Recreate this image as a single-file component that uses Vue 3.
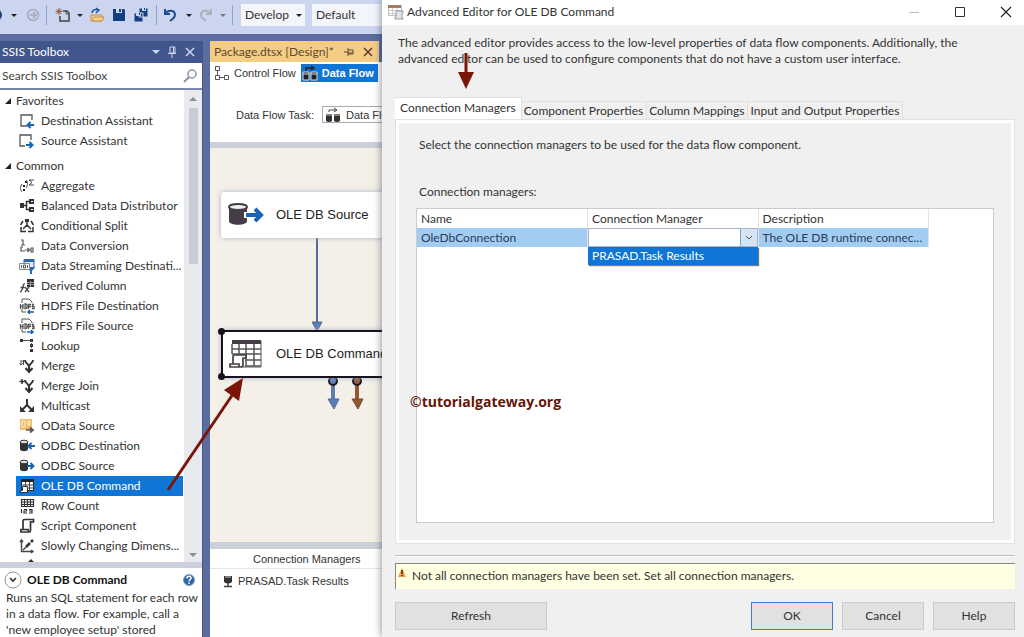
<script setup>
  import {ref} from 'vue'

  const search = ref('')
  const selectedTool = ref('OLE DB Command')
  const selectedTab = ref('Connection Managers')

  const tabs = ['Connection Managers', 'Component Properties', 'Column Mappings', 'Input and Output Properties']

  const cylinder = '<path fill="#333" d="M1 4v7c0 3 8 3 8 0V4z"/><ellipse cx="5" cy="4" rx="4" ry="1.8" fill="#ddd" stroke="#333"/>'
  const arrowLeft = '<path stroke="#1763b5" stroke-width="2" fill="none" d="M16 8H10M12.500 5l-3 3 3 3"/>'
  const arrowRight = '<path stroke="#1763b5" stroke-width="2" fill="none" d="M8 8h6M11.500 5l3 3-3 3"/>'
  const hdfs = '<path fill="none" stroke="#555" d="M3 5V1h7l3 3v1M3 11v3h4"/><path stroke="#555" stroke-width="1.300" fill="none" d="M1.500 6v5M4 6v5M1.500 8.500H4M6 6v4.500h1l1-1v-2.500l-1-1zM12 6.500H9.500V11M9.500 8.500H12M15 6.500h-1.500v2H15v2h-2"/>'
  const merge = '<path fill="none" stroke="#333" stroke-width="2" d="M6 2c0 4 4 3 4 7v5M14 2c0 4-4 3-4 7M6.500 10l3.500 4 3.500-4"/>'

  const icons = {
    destAssistant: '<path fill="none" stroke="#555" stroke-width="1.300" d="M8 13H2V2h11v5"/><path fill="none" stroke="#1763b5" stroke-width="2" d="M15 12H9M11.500 9l-3 3 3 3"/>',
    sourceAssistant: '<path fill="none" stroke="#555" stroke-width="1.300" d="M6 13H1V2h11v5"/><path fill="none" stroke="#1763b5" stroke-width="2" d="M7 12h6M10.500 9l3 3-3 3"/>',
    aggregate: '<path fill="none" stroke="#444" d="M3 6c-2 3-2 6 0 8M7 2c2 2 2 5 0 8M15 2h-5l3 2.500L10 7h5"/><path fill="#222" d="M4 7h2v2H4zM4 11h2v2H4zM6 3h2v2H6z"/>',
    balanced: '<path fill="#333" d="M1 5h4v5H1zM10 1h5v5h-5zM10 9h5v5h-5z"/><path fill="none" stroke="#333" stroke-width="1.500" d="M4 7.500h4M10 3.500H7.500v8H10"/><path fill="#fff" d="M12 3h2v1h-2zM12 11h2v1h-2z"/>',
    split: '<path fill="none" stroke="#333" stroke-width="1.500" d="M8 3v4l-4 4M8 7l4 4M2 9v4.500h5M14 9v4.500H9M4 3 1.500 7M12 3l2.500 4"/><path fill="#333" d="M6 1h4v3H6z"/>',
    conversion: '<path fill="none" stroke="#555" stroke-width="1.200" d="M2 2h2v5M2 7h4M4 9H2v4h4M6 12h4M8.500 10l2 2-2 2M12 10h2v4h-2z"/>',
    streaming: '<path fill="#dbe8f5" stroke="#2c68ad" d="M5 1.500h10v9H5z"/><path fill="#2c68ad" d="M5 1h10v3H5zM7 9h9l-3 4v3h-2v-3z"/><path fill="#fff" stroke="#888" d="M.5 5.500h10v6H.5z"/><path fill="none" stroke="#555" d="M2.500 7v3M4.500 7h2v3h-2zM8.500 7v3"/>',
    derived: '<path fill="#333" d="M8 1h7v8H8z"/><path stroke="#999" d="M8 4.500h7M8 6.500h7M11.500 3v6"/><path fill="none" stroke="#444" stroke-width="1.300" d="M6 6C3 5 5 13 1 14M1.500 9.500h4M6 9l4 5M10 9l-4 5"/>',
    hdfsDest: hdfs + '<path fill="none" stroke="#1763b5" stroke-width="1.500" d="M15 14H9M11 12l-2 2 2 2"/>',
    hdfsSource: hdfs + '<path fill="none" stroke="#1763b5" stroke-width="1.500" d="M8 14h6M12 12l2 2-2 2"/>',
    lookup: '<path fill="#333" d="M1 1h3v3H1zM11 1h3v3h-3zM11 6h3v3h-3zM11 11h3v3h-3z"/><path stroke="#555" fill="none" d="M4 2.500h8"/><path stroke="#555" stroke-dasharray="1 1" fill="none" d="M12.500 3v9"/>',
    merge: merge + '<path fill="none" stroke="#444" d="M2 2v5M.5 5.500 2 7l1.500-1.500M4.500 7V2M3.500 3.500l1-1.500"/>',
    mergeJoin: merge + '<path stroke="#333" stroke-width="1.500" d="M3 1v5M.5 3.500h5"/>',
    multicast: '<path fill="none" stroke="#333" stroke-width="2" d="M8 1v6l-5 5M8 7l5 5"/><path fill="#333" d="M1 8v6h6zM15 8v6H9z"/>',
    odata: '<path fill="#f1bd69" d="M1 1h12v11H1z"/><path fill="none" stroke="#fff3d8" d="M3 3h3v6H3zM9 3h2v4H9z"/><path fill="none" stroke="#555" stroke-width="1.700" d="M7 12h6M11 9.500l3 2.500-3 2.500"/>',
    odbcDest: cylinder + arrowLeft,
    odbcSource: cylinder + arrowRight,
    command: '<path fill="#fff" stroke="#222" d="M2.500 1.500h12v11h-12z"/><path fill="#222" d="M2 1h13v3H2z"/><path stroke="#444" fill="none" d="M2 7h13M2 10h13M6.500 4v9M10.500 4v9"/><path fill="#fff" stroke="#333" d="M3.500 8.500h5v6h-7v-2h2z"/>',
    rowCount: '<path fill="none" stroke="#333" stroke-width="1.200" d="M2.500 1.500h12v7h-12zM2 4h13M2 6.500h13M5.500 1v8M8.500 1v8M11.500 1v8M2.500 11v4M5 11.500h2.500v1.500H5v2h3M10 11.500h3V15h-3M10 13h3"/>',
    script: '<path fill="none" stroke="#333" stroke-width="1.700" d="M4 11V3q0-1.500 2-1.500h8.500V4H12M11.500 3v9q0 2-2 2H2v-2.500h7V13"/>',
    scd: '<path fill="none" stroke="#444" stroke-width="1.400" d="M2.500 14V2M1 4l1.500-2L4 4M2 13.500h12M12 12l2 1.500-2 1.500M4 12l3-3"/><path stroke="#333" stroke-width="2.500" d="m7 9 4-4M12 4l2-2"/>',
    sort: '<path fill="#333" d="M2 4h4v3H2zM9 4l3-3 3 3v3H9z"/>'
  }

  const groups = [
    {
      name: 'Favorites',
      items: [
        {name: 'Destination Assistant', icon: 'destAssistant'},
        {name: 'Source Assistant', icon: 'sourceAssistant'}
      ]
    },
    {
      name: 'Common',
      items: [
        {name: 'Aggregate', icon: 'aggregate'},
        {name: 'Balanced Data Distributor', icon: 'balanced'},
        {name: 'Conditional Split', icon: 'split'},
        {name: 'Data Conversion', icon: 'conversion'},
        {name: 'Data Streaming Destinati...', icon: 'streaming'},
        {name: 'Derived Column', icon: 'derived'},
        {name: 'HDFS File Destination', icon: 'hdfsDest'},
        {name: 'HDFS File Source', icon: 'hdfsSource'},
        {name: 'Lookup', icon: 'lookup'},
        {name: 'Merge', icon: 'merge'},
        {name: 'Merge Join', icon: 'mergeJoin'},
        {name: 'Multicast', icon: 'multicast'},
        {name: 'OData Source', icon: 'odata'},
        {name: 'ODBC Destination', icon: 'odbcDest'},
        {name: 'ODBC Source', icon: 'odbcSource'},
        {name: 'OLE DB Command', icon: 'command'},
        {name: 'Row Count', icon: 'rowCount'},
        {name: 'Script Component', icon: 'script'},
        {name: 'Slowly Changing Dimens...', icon: 'scd'},
        {name: 'Sort', icon: 'sort'}
      ]
    }
  ]
</script>

<template>
  <main class="desktop">
    <div class="ide">
      <div class="toolbar">
        <button class="tool back" aria-label="Back">
          <svg width="16" height="16" viewBox="0 0 16 16"><circle cx="8" cy="8" r="6" fill="#1c3f87"/><path d="M12 8H5M8 5 5 8l3 3" fill="none" stroke="#fff" stroke-width="1.500"/></svg>
        </button>
        <i class="caret"></i>
        <button class="tool forward" aria-label="Forward">
          <svg width="14" height="14" viewBox="0 0 14 14"><circle cx="7" cy="7" r="5.500" fill="none" stroke="#a3abb9" stroke-width="1.500"/><path d="M3 7h7M7 4l3 3-3 3" fill="none" stroke="#a3abb9" stroke-width="1.700"/></svg>
        </button>
        <i class="sep"></i>
        <button class="tool" aria-label="New project">
          <svg width="16" height="16" viewBox="0 0 16 16"><path d="M8 4h4l2 2v8H5V9" fill="none" stroke="#444" stroke-width="1.500"/><path d="M11 3v4h3" fill="none" stroke="#444"/><path d="M4 1v7M.5 4.500h7M1.500 2l5 5M6.500 2l-5 5" stroke="#8b5b30" stroke-width="1"/></svg>
        </button>
        <i class="caret"></i>
        <button class="tool" aria-label="Open file">
          <svg width="16" height="16" viewBox="0 0 16 16"><path d="M2 14V8h11v6z" fill="#ead1a3" stroke="#c99241"/><path d="M3 14 5 10h10l-2 4z" fill="#f2d395" stroke="#c99241"/><path d="M3 6c0-3 3-4 6-3M7 1l3 2-3 3" fill="none" stroke="#24599f" stroke-width="1.500"/></svg>
        </button>
        <button class="tool" aria-label="Save">
          <svg width="16" height="16" viewBox="0 0 16 16"><path d="M2 2h11l1 1v11H2z" fill="#153e80"/><path d="M5 2h6v4H5z" fill="#ccd5f0"/><path d="M8 2h2v3H8z" fill="#153e80"/></svg>
        </button>
        <button class="tool save-all" aria-label="Save all">
          <svg width="16" height="16" viewBox="0 0 16 16"><path d="M6 1h9v9H6zM1 6h9v9H1z" fill="#153e80" stroke="#ccd5f0"/><path d="M9 1h4v3H9zM3 6h5v3H3z" fill="#ccd5f0"/><path d="M11 1h1v2h-1zM6 6h1v2H6z" fill="#153e80"/></svg>
        </button>
        <i class="sep"></i>
        <button class="tool undo" aria-label="Undo">
          <svg width="16" height="16" viewBox="0 0 16 16"><path d="M3 2v5h5M3 7c3-5 10-4 10 1 0 3-3 4-5 6" fill="none" stroke="#1d4b91" stroke-width="2"/></svg>
        </button>
        <i class="caret"></i>
        <button class="tool redo" aria-label="Redo">
          <svg width="16" height="16" viewBox="0 0 16 16"><path d="M13 2v5H8M13 7C10 2 3 3 3 8c0 3 3 4 5 6" fill="none" stroke="#a9b1bf" stroke-width="2"/></svg>
        </button>
        <i class="caret dim"></i>
        <i class="sep"></i>
        <span class="select develop">
          <select aria-label="Configuration"><option>Develop</option></select>
          <i class="caret"></i>
        </span>
        <span class="select platform">
          <select aria-label="Platform"><option>Default</option></select>
        </span>
      </div>

      <div class="workspace">
        <aside class="toolbox">
          <header class="toolbox__title">
            <h2>SSIS Toolbox</h2>
            <button aria-label="Window position"><i class="caret"></i></button>
            <button aria-label="Auto hide">
              <svg width="12" height="12" viewBox="0 0 12 12"><path d="M4 1h5v6H4zM2 7.500h8M6 8v4M7.500 1v6" fill="none" stroke="#ccd6ef"/></svg>
            </button>
            <button aria-label="Close toolbox">
              <svg width="12" height="12" viewBox="0 0 12 12"><path d="m2 2 8 8M10 2l-8 8" stroke="#ccd6ef" stroke-width="1.500"/></svg>
            </button>
          </header>
          <div class="searchbox">
            <input v-model="search" type="text" aria-label="Search SSIS Toolbox" placeholder="Search SSIS Toolbox">
            <svg width="16" height="16" viewBox="0 0 16 16"><circle cx="10" cy="6" r="4" fill="none" stroke="#8b93a0" stroke-width="1.500"/><path d="m7 9-5 5" stroke="#8b93a0" stroke-width="2"/></svg>
          </div>
          <div class="tools">
            <div class="tools__list">
              <section v-for="group in groups" :key="group.name" class="group">
                <h3><svg width="6" height="6" viewBox="0 0 6 6"><path d="M6 0v6H0z" fill="#222"/></svg>{{ group.name }}</h3>
                <button
                  v-for="item in group.items"
                  :key="item.name"
                  class="item"
                  :class="{selected: item.name === selectedTool}"
                  @click="selectedTool = item.name"
                >
                  <svg width="16" height="16" viewBox="0 0 16 16" v-html="icons[item.icon]"></svg>
                  <span>{{ item.name }}</span>
                </button>
              </section>
            </div>
            <div class="scrollbar">
              <i class="up"></i>
              <div class="thumb"></div>
              <i class="down"></i>
            </div>
          </div>
          <div class="details">
            <header>
              <button class="round" aria-label="Collapse">
                <svg width="18" height="18" viewBox="0 0 18 18"><circle cx="9" cy="9" r="8" fill="#fff" stroke="#999"/><path d="m6 7 3 3 3-3" fill="none" stroke="#333" stroke-width="1.700"/></svg>
              </button>
              <h3>{{ selectedTool }}</h3>
              <button class="round" aria-label="Help on this item">
                <svg width="12" height="12" viewBox="0 0 12 12"><circle cx="6" cy="6" r="5.500" fill="#2c64a8" stroke="#8b9bb2"/><path d="M4 4.500c0-3 4-3 4-.5 0 2-2 1.500-2 3.500M6 8.500V10" fill="none" stroke="#fff" stroke-width="1.500"/></svg>
              </button>
            </header>
            <p>Runs an SQL statement for each row in a data flow. For example, call a 'new employee setup' stored</p>
          </div>
        </aside>

        <section class="document">
          <div class="doctab">
            <span>Package.dtsx [Design]*</span>
            <button aria-label="Pin tab">
              <svg width="10" height="10" viewBox="0 0 10 10"><path d="M0 5h4M4 1v8M4 3h5v4H4M4 6h5" fill="none" stroke="#5b4931"/></svg>
            </button>
            <button aria-label="Close tab">
              <svg width="10" height="10" viewBox="0 0 10 10"><path d="m1 1 8 8M9 1 1 9" stroke="#5b3931" stroke-width="1.500"/></svg>
            </button>
          </div>
          <div class="flowbar">
            <div class="flowtabs">
              <button>
                <svg width="16" height="16" viewBox="0 0 16 16"><path d="M1.500 1.500h4v4h-4zM1.500 10.500h4v4h-4zM10.500 10.500h4v4h-4zM3.500 6v4M6 12.500h4" fill="none" stroke="#555"/></svg>
                Control Flow
              </button>
              <button class="active">
                <svg width="16" height="16" viewBox="0 0 16 16"><path d="M1 7h6v8H1zM9 7h6v8H9z" fill="#222" stroke="#ddd"/><path d="M1 9h6M9 9h6" stroke="#ddd"/><path d="M4 6V3h7M9 1l3 2-3 2" fill="none" stroke="#222" stroke-width="1.500"/></svg>
                Data Flow
              </button>
              <button aria-label="Parameters">
                <svg width="16" height="16" viewBox="0 0 16 16"><rect y="3" width="14" height="10" rx="3" fill="#333"/></svg>
              </button>
            </div>
            <div class="flowtask">
              <label for="task">Data Flow Task:</label>
              <span class="task">
                <svg width="16" height="16" viewBox="0 0 16 16"><path d="M1 7h6v7q-3 2-6 0zM9 7h6v7q-3 2-6 0z" fill="#333"/><path d="M1 8h6M9 8h6" stroke="#ccc"/><path d="M4 5V3h7M9 1l3 2-3 2" fill="none" stroke="#444"/></svg>
                <select id="task"><option>Data Flow Task</option></select>
              </span>
            </div>
          </div>
          <div class="canvas">
            <svg class="wires" width="172" height="394" viewBox="0 0 172 394">
              <path d="M107 90v87" stroke="#50699f" stroke-width="2"/>
              <path d="M102 174h10l-5 9z" fill="#5e7cb4" stroke="#50699f"/>
              <path d="M123 236v18" stroke="#5e7cb4" stroke-width="4"/><path d="M118 251h11l-5 10z" fill="#5e7cb4" stroke="#50699f"/>
              <path d="M147 236v18" stroke="#8f5a35" stroke-width="4"/><path d="M142 251h11l-5 10z" fill="#8f5a35" stroke="#7d4a2c"/>
              <circle cx="123" cy="233" r="4" fill="#5e7cb4" stroke="#18141f" stroke-width="2"/>
              <circle cx="147" cy="233" r="4" fill="#8f5a35" stroke="#18141f" stroke-width="2"/>
            </svg>
            <div class="node source">
              <svg width="36" height="28" viewBox="0 0 36 28"><path d="M1 6v14c0 5 18 5 18 0v-3h-3v-6h3V6z" fill="#453d46"/><ellipse cx="10" cy="6" rx="9" ry="3" fill="#eee" stroke="#453d46" stroke-width="2"/><path d="M18 14h14M27 8l6 6-6 6" fill="none" stroke="#1763b5" stroke-width="4"/></svg>
              <span>OLE DB Source</span>
            </div>
            <div class="node command">
              <i class="handle top"></i>
              <i class="handle bottom"></i>
              <svg width="36" height="30" viewBox="0 0 36 30"><path d="M4 2h29v26H15" fill="#fff" stroke="#555"/><path d="M4 1h29v4H4z" fill="#453d46"/><path d="M4 5v10M4 10h29M4 15h29M17 21h16M11 5v10M18 5v22M26 5v22M17 27h16" fill="none" stroke="#555" stroke-width="1.500"/><path d="M5 25V18q0-2 2-2h11v3h-3v7q0 2-2 2H2v-3h9v3" fill="#fff" stroke="#453d46" stroke-width="1.700"/></svg>
              <span>OLE DB Command</span>
            </div>
          </div>
          <div class="managers">
            <h3>Connection Managers</h3>
            <p>
              <svg width="10" height="14" viewBox="0 0 10 14"><path d="M1 2h8v6q-4 3-8 0z" fill="#333"/><path d="M2 3h6" stroke="#ccc"/><path d="M5 9v3M1 12.500h8" stroke="#444" stroke-width="1.500"/></svg>
              PRASAD.Task Results
            </p>
          </div>
        </section>
      </div>
    </div>

    <section class="dialog" role="dialog" aria-labelledby="dialog-title">
      <header class="titlebar">
        <svg width="16" height="16" viewBox="0 0 16 16"><path d="M.5 1.500h13v10H.5z" fill="#fff" stroke="#bbb"/><path d="M0 1h13v3H0z" fill="#aa7b58"/><path d="M0 6.500h13M0 9.500h9M4.500 4v8M9 4v6" stroke="#ccc"/><path d="M8 7h7v2h-1v5h1v1H7v-2h1z" fill="#e1e7ec" stroke="#929da7"/></svg>
        <h1 id="dialog-title">Advanced Editor for OLE DB Command</h1>
        <button aria-label="Minimize"><svg width="12" height="12" viewBox="0 0 12 12"><path d="M1 6.500h10" stroke="#bbb"/></svg></button>
        <button aria-label="Maximize"><svg width="12" height="12" viewBox="0 0 12 12"><path d="M1.500 1.500h9v9h-9z" fill="none" stroke="#333"/></svg></button>
        <button aria-label="Close"><svg width="12" height="12" viewBox="0 0 12 12"><path d="m1 1 10 10M11 1 1 11" stroke="#222" stroke-width="1.200"/></svg></button>
      </header>
      <div class="dialog__body">
        <p class="intro">The advanced editor provides access to the low-level properties of data flow components. Additionally, the advanced editor can be used to configure components that do not have a custom user interface.</p>
        <div class="tabs" role="tablist">
          <button
            v-for="tab in tabs"
            :key="tab"
            role="tab"
            :aria-selected="tab === selectedTab"
            :class="{active: tab === selectedTab}"
            @click="selectedTab = tab"
          >{{ tab }}</button>
        </div>
        <div class="panel">
          <p>Select the connection managers to be used for the data flow component.</p>
          <p class="panel__label">Connection managers:</p>
          <div class="grid">
            <table>
              <thead>
                <tr><th>Name</th><th>Connection Manager</th><th>Description</th></tr>
              </thead>
              <tbody>
                <tr>
                  <td>OleDbConnection</td>
                  <td class="picker">
                    <div class="combo">
                      <select aria-label="Connection Manager"><option></option><option>PRASAD.Task Results</option></select>
                      <i class="combo__arrow"><svg width="8" height="6" viewBox="0 0 8 6"><path d="m1 1 3 3 3-3" fill="none" stroke="#555"/></svg></i>
                    </div>
                    <ul role="listbox"><li role="option">PRASAD.Task Results</li></ul>
                  </td>
                  <td>The OLE DB runtime connec...</td>
                </tr>
              </tbody>
            </table>
          </div>
        </div>
        <hr>
        <div class="warning">
          <svg width="8" height="10" viewBox="0 0 8 10"><path d="m4 0 4 9H0z" fill="#e9a24a"/><path d="M4 2v4M4 7v1" stroke="#5a1c10" stroke-width="1.500"/></svg>
          <span>Not all connection managers have been set. Set all connection managers.</span>
        </div>
        <footer class="actions">
          <button class="refresh">Refresh</button>
          <button class="ok">OK</button>
          <button>Cancel</button>
          <button>Help</button>
        </footer>
      </div>
    </section>

    <p class="watermark">©tutorialgateway.org</p>
    <svg class="pointer to-node" width="80" height="116" viewBox="0 0 80 116"><path d="M2 114 67 18" stroke="#7a1508" stroke-width="3"/><path d="M77 2 58 14l15 11z" fill="#7a1508"/></svg>
    <svg class="pointer to-tab" width="18" height="36" viewBox="0 0 18 36"><path d="M9 0v20" stroke="#7a1508" stroke-width="3"/><path d="M1 19h16L9 36z" fill="#7a1508"/></svg>
  </main>
</template>

<style>
body {
  margin: 0;
  overflow: hidden;
}
</style>

<style scoped>
* {
  margin: 0;
  padding: 0;
  box-sizing: border-box;
}
.desktop {
  position: relative;
  height: 100vh;
  overflow: hidden;
  background-color: #5b6d9f;
  color: #333;
  font-family: Lato, "Noto Sans", sans-serif;
  font-size: 12px;
  line-height: 16px;
}
svg {
  display: block;
  flex: none;
}
button, select, input {
  border: none;
  background: none;
  color: inherit;
  font: inherit;
}
select {
  appearance: none;
  outline: none;
}
h1, h2, h3 {
  font-size: 12px;
  font-weight: normal;
}
.ide {
  display: flex;
  flex-direction: column;
  height: 100%;
}
.caret {
  flex: none;
  border: 3px solid transparent;
  border-top-color: #222;
  border-bottom: none;
}
.caret.dim {
  border-top-color: #777;
}

/* toolbar */
.toolbar {
  display: flex;
  align-items: center;
  height: 34px;
  flex: none;
  padding-bottom: 4px;
  background-color: #ccd5f0;
}
.tool {
  flex: none;
  margin-right: 6px;
}
.back {
  margin-left: -12px;
  margin-right: 7px;
}
.caret + .tool {
  margin-left: 6px;
}
.tool.forward {
  margin-left: 9px;
}
.sep {
  width: 1px;
  height: 20px;
  flex: none;
  margin-right: 8px;
  background-color: #8da4cb;
}
.save-all {
  margin-right: 7px;
}
.undo {
  margin-left: -3px;
  margin-right: 8px;
}
.caret.dim {
  margin-right: 6px;
}
.select {
  display: flex;
  align-items: center;
  height: 22px;
  margin-right: 7px;
  padding: 0 4px;
  background-color: #f3f5fb;
}
.develop {
  width: 64px;
  flex: none;
}
.develop select {
  width: 51px;
  flex: none;
}
.platform {
  width: 90px;
}

/* toolbox */
.workspace {
  display: flex;
  flex: 1;
  min-height: 0;
  gap: 7px;
  padding-top: 7px;
}
.toolbox {
  display: flex;
  flex-direction: column;
  flex: none;
  width: 203px;
  border-right: 1px solid #405791;
}
.toolbox__title {
  display: flex;
  align-items: center;
  height: 22px;
  flex: none;
  gap: 6px;
  padding: 0 6px 0 2px;
  background-color: #40568d;
  color: #fff;
}
.toolbox__title h2 {
  flex: 1;
}
.toolbox__title .caret {
  display: block;
  border-width: 4px;
  border-top-color: #ccd6ef;
  border-bottom: none;
}
.searchbox {
  display: flex;
  align-items: center;
  height: 27px;
  flex: none;
  padding: 0 4px 0 2px;
  border-bottom: 2px solid #7786ab;
  background-color: #fff;
}
.searchbox input {
  flex: 1;
  min-width: 0;
}
.searchbox input::placeholder {
  color: #444;
}
.tools {
  display: flex;
  flex: 1;
  min-height: 0;
  background-color: #fff;
}
.tools__list {
  flex: 1;
  min-width: 0;
  overflow: hidden;
  padding-top: 1px;
}
.group {
  padding-bottom: 5px;
}
.group h3 {
  display: flex;
  align-items: center;
  gap: 5px;
  height: 20px;
  padding-left: 5px;
}
.item {
  display: flex;
  align-items: center;
  gap: 6px;
  width: 167px;
  height: 20px;
  margin-left: 16px;
  padding-left: 3px;
  text-align: left;
  white-space: nowrap;
}
.item.selected {
  background-color: #0f76d8;
  color: #fff;
}
.scrollbar {
  display: flex;
  flex-direction: column;
  align-items: center;
  width: 18px;
  flex: none;
  padding: 7px 0 5px;
  background-color: #e9eaee;
}
.up, .down {
  border: 4px solid transparent;
}
.up {
  border-top: none;
  border-bottom-color: #8c8f98;
}
.down {
  margin-top: auto;
  border-bottom: none;
  border-top-color: #8c8f98;
}
.thumb {
  width: 9px;
  height: 156px;
  margin-top: 7px;
  background-color: #c8ccd5;
}
.details {
  height: 75px;
  flex: none;
  overflow: hidden;
  padding: 2px 2px 0 4px;
  border-top: 6px solid #cbd0dd;
  background-color: #fff;
}
.details header {
  display: flex;
  align-items: center;
  gap: 5px;
  height: 20px;
  padding-right: 5px;
}
.details h3 {
  flex: 1;
  color: #111;
  font-weight: bold;
}
.details p {
  padding-left: 2px;
}

/* document */
.document {
  display: flex;
  flex-direction: column;
  flex: 1;
  min-width: 0;
  font-family: "Liberation Sans", Arial, sans-serif;
  font-size: 11px;
}
.doctab {
  display: flex;
  align-items: center;
  gap: 9px;
  width: 169px;
  height: 21px;
  flex: none;
  padding: 0 6px 0 4px;
  background-color: #f5cc84;
  color: #5b4931;
  font-family: Lato, "Noto Sans", sans-serif;
  font-size: 12px;
}
.doctab span {
  flex: 1;
  white-space: nowrap;
}
.flowbar {
  height: 86px;
  flex: none;
  border-bottom: 6px solid #cbd0d8;
  background-color: #fff;
}
.flowtabs, .flowtask {
  display: flex;
  align-items: center;
}
.flowtabs {
  gap: 5px;
  height: 22px;
  padding-left: 4px;
}
.flowtabs button {
  display: flex;
  align-items: center;
  gap: 4px;
  height: 18px;
}
.flowtabs .active {
  padding: 0 4px 0 1px;
  background-color: #0f76d8;
  color: #fff;
  font-weight: bold;
}
.flowtask {
  gap: 8px;
  padding: 22px 0 0 26px;
}
.task {
  display: flex;
  align-items: center;
  gap: 5px;
  width: 200px;
  height: 17px;
  padding-left: 2px;
  border: 1px solid #aaa;
}
.canvas {
  position: relative;
  flex: 1;
  min-height: 0;
  overflow: hidden;
  background-color: #f4f0e8;
}
.wires {
  position: absolute;
  left: 0;
  top: 0;
}
.node {
  position: absolute;
  left: 11px;
  display: flex;
  align-items: center;
  gap: 12px;
  width: 200px;
  height: 46px;
  padding-left: 7px;
  border-radius: 3px;
  background-color: #fff;
  box-shadow: 0 0 5px #aab3c4;
  color: #222;
  font-size: 13px;
}
.source {
  top: 44px;
}
.command {
  top: 182px;
  height: 48px;
  padding-left: 5px;
  border: 2px solid #18141f;
}
.handle {
  position: absolute;
  left: -5px;
  width: 7px;
  height: 7px;
  border-radius: 50%;
  background-color: #18141f;
}
.handle.top {
  top: -4px;
}
.handle.bottom {
  bottom: -4px;
}
.managers {
  height: 95px;
  flex: none;
  border-top: 7px solid #cbd0d8;
  background-color: #fff;
}
.managers h3 {
  height: 20px;
  padding-left: 43px;
  border-bottom: 1px solid #e5e5e5;
  font-size: 11px;
  line-height: 20px;
}
.managers p {
  display: flex;
  align-items: center;
  gap: 5px;
  padding: 4px 0 0 13px;
}

/* dialog */
.dialog {
  position: absolute;
  inset: 0 0 0 382px;
  display: flex;
  flex-direction: column;
  background-color: #f0f0f0;
  box-shadow: 0 0 8px rgba(40, 45, 60, 0.6);
}
.titlebar {
  display: flex;
  align-items: center;
  height: 25px;
  flex: none;
  gap: 3px;
  padding: 0 12px 2px 6px;
  background-color: #fff;
}
.titlebar h1 {
  flex: 1;
}
.titlebar button {
  margin-left: 31px;
}
.dialog__body {
  display: flex;
  flex-direction: column;
  flex: 1;
  min-height: 0;
  padding: 10px 9px 7px 13px;
}
.intro {
  width: 580px;
  max-width: 100%;
  padding-left: 3px;
}
.tabs {
  display: flex;
  align-items: flex-end;
  margin-top: 30px;
}
.tabs button {
  height: 18px;
  padding: 0 3px 0 2px;
  border: 1px solid #e0e0e0;
  border-bottom: none;
  border-left: none;
  line-height: 16px;
  white-space: nowrap;
}
.tabs .active {
  height: 22px;
  padding: 0 5px 2px;
  background-color: #fff;
}
.panel {
  display: flex;
  flex-direction: column;
  flex: 1;
  min-height: 0;
  padding: 14px 17px 17px;
  border: 4px solid #fff;
  outline: 1px solid #e2e2e2;
  outline-offset: -1px;
}
.panel p {
  padding-left: 3px;
}
.panel__label {
  margin-top: 31px;
}
.grid {
  flex: 1;
  min-height: 0;
  margin-top: 8px;
  border: 1px solid #ccc;
  background-color: #fff;
}
table {
  width: 512px;
  table-layout: fixed;
  border-collapse: collapse;
}
th, td {
  height: 19px;
  padding: 0 4px;
  border-right: 1px solid #e3e3e3;
  font-weight: normal;
  text-align: left;
  white-space: nowrap;
}
td {
  background-color: #a3cdf0;
  color: #2a3c5c;
}
td.picker {
  position: relative;
  padding: 0;
  background-color: #fff;
}
.combo {
  display: flex;
  height: 19px;
  border: 1px solid #a8b4ce;
}
.combo select {
  flex: 1;
  min-width: 0;
}
.combo__arrow {
  display: flex;
  align-items: center;
  justify-content: center;
  width: 17px;
  border-left: 1px solid #7f9fc8;
  background-color: #d5e5f5;
}
.picker ul {
  position: absolute;
  left: 0;
  top: 100%;
  width: 100%;
  height: 18px;
  padding-left: 4px;
  background-color: #0f76d8;
  box-shadow: 1px 1px 1px #777;
  color: #fff;
  line-height: 18px;
  list-style: none;
}
hr {
  height: 2px;
  flex: none;
  margin: 11px 0 6px;
  border: none;
  border-top: 1px solid #bbb;
  border-bottom: 1px solid #fff;
}
.warning {
  display: flex;
  gap: 6px;
  height: 26px;
  flex: none;
  padding: 4px 2px;
  border-top: 1px solid #888;
  border-left: 1px solid #888;
  background-color: #ffffe1;
}
.actions {
  display: flex;
  gap: 9px;
  flex: none;
  margin-top: 13px;
}
.actions button {
  width: 82px;
  height: 28px;
  border: 1px solid #cacaca;
  background-color: #e1e1e1;
}
.actions .refresh {
  width: 152px;
  margin-right: auto;
}
.actions .ok {
  border-color: #3f7fc8;
}

/* notes drawn over the windows */
.watermark {
  position: absolute;
  left: 410px;
  top: 394px;
  color: #641508;
  font-family: "Open Sans", sans-serif;
  font-size: 14px;
  font-weight: bold;
}
.pointer {
  position: absolute;
  pointer-events: none;
}
.to-node {
  left: 166px;
  top: 376px;
}
.to-tab {
  left: 457px;
  top: 53px;
}
</style>
